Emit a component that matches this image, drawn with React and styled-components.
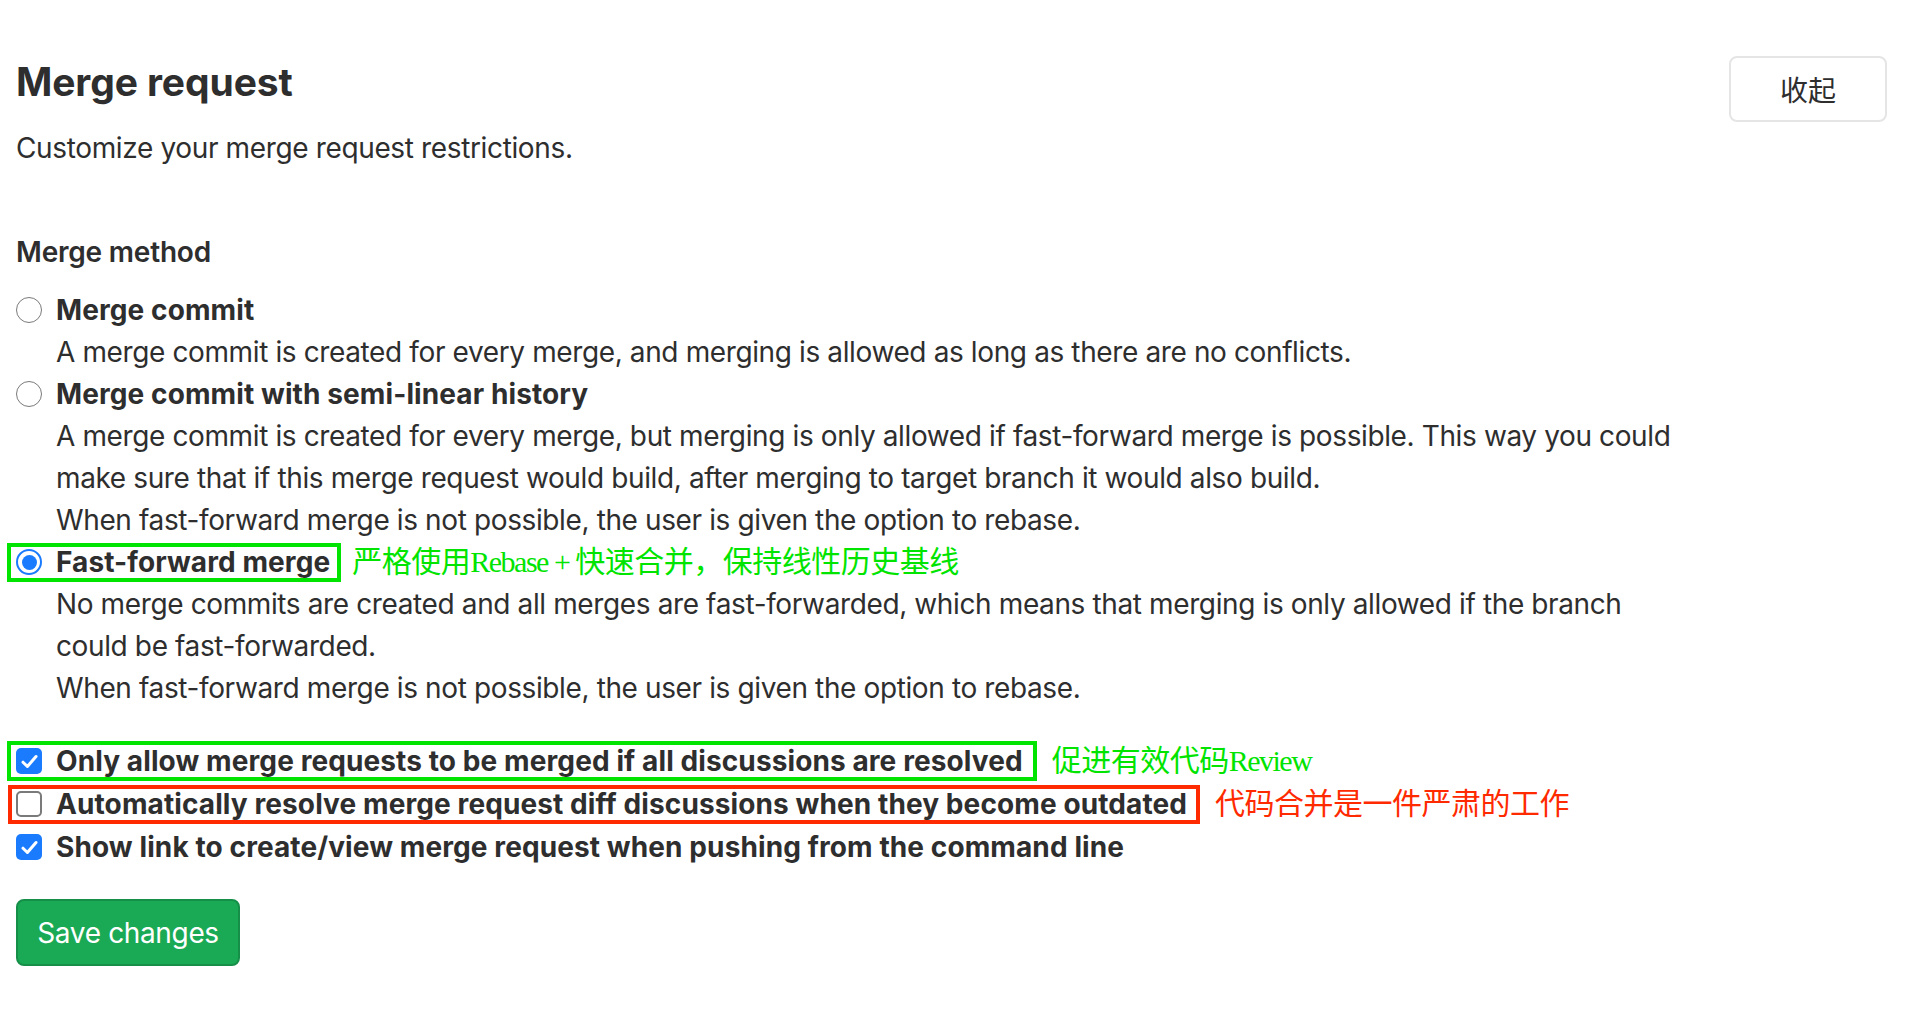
import React from "react";
import styled, { createGlobalStyle, css } from "styled-components";

const GlobalStyle = createGlobalStyle`
  html, body {
    margin: 0;
    padding: 0;
    background: #ffffff;
  }
  body {
    font-family: Inter, "Liberation Sans", "Noto Sans CJK SC", sans-serif;
    color: #2e2e2e;
    -webkit-font-smoothing: antialiased;
  }
  * { box-sizing: border-box; }
`;

const Page = styled.div`
  padding: 0 29px 40px 16px;
  width: 1916px;
`;

const Header = styled.header`
  display: flex;
  justify-content: space-between;
  align-items: flex-start;
`;

const HeaderText = styled.div`
  display: flex;
  flex-direction: column;
  padding-top: 58px;
`;

const Title = styled.h4`
  margin: 0;
  font-size: 39px;
  line-height: 48px;
  font-weight: 700;
  letter-spacing: -0.1px;
  color: #2e2e2e;
`;

const Subtitle = styled.p`
  margin: 21px 0 0;
  font-size: 28px;
  line-height: 42px;
  letter-spacing: -0.36px;
`;

const CollapseButton = styled.button`
  margin-top: 56px;
  width: 158px;
  height: 66px;
  background: #fff;
  border: 2px solid #e5e5e5;
  border-radius: 8px;
  font-family: "Noto Sans CJK SC", sans-serif;
  font-size: 28px;
  color: #2e2e2e;
  cursor: pointer;
`;

const Body = styled.section`
  margin-top: 62px;
  display: flex;
  flex-direction: column;
  align-items: flex-start;
`;

const FieldLabel = styled.div`
  font-size: 28px;
  line-height: 42px;
  font-weight: 600;
  letter-spacing: -0.2px;
  margin-bottom: 16px;
`;

const Options = styled.div`
  display: flex;
  flex-direction: column;
  align-items: flex-start;
`;

const Row = styled.label`
  position: relative;
  display: inline-flex;
  align-items: center;
  gap: 14px;
  height: 42px;
  font-size: 28px;
  font-weight: 700;
  letter-spacing: 0.1px;
  white-space: nowrap;
`;

const Annotated = styled.div`
  display: inline-flex;
  align-items: center;
  ${(p) => p.$space && css`margin-top: ${p.$space}px;`}
`;

const Frame = styled.span`
  position: absolute;
  pointer-events: none;
  border: 4px solid ${(p) => p.$color};
  top: ${(p) => p.$t}px;
  bottom: ${(p) => p.$b}px;
  left: ${(p) => p.$l}px;
  right: ${(p) => p.$r}px;
`;

const Note = styled.span`
  font-family: "Liberation Serif", "Noto Sans CJK SC", serif;
  font-size: 30px;
  line-height: 42px;
  color: ${(p) => p.$color};
  margin-left: ${(p) => p.$gap}px;
  white-space: nowrap;
  letter-spacing: -0.5px;
`;

const Latin = styled.span`
  letter-spacing: -1.5px;
`;

const Help = styled.p`
  margin: 0;
  padding-left: 40px;
  max-width: 1672px;
  font-size: 28px;
  line-height: 42px;
  letter-spacing: -0.38px;
  font-weight: 400;
`;

const RadioDot = styled.span`
  flex: none;
  width: 26px;
  height: 26px;
  border-radius: 50%;
  background: #fff;
  display: inline-flex;
  align-items: center;
  justify-content: center;
  border: ${(p) => (p.$on ? "2px solid #1a7bff" : "1.5px solid #7a7a7a")};
  &::after {
    content: "";
    display: ${(p) => (p.$on ? "block" : "none")};
    width: 15px;
    height: 15px;
    border-radius: 50%;
    background: #1a7bff;
  }
`;

const Box = styled.span`
  flex: none;
  width: 26px;
  height: 26px;
  border-radius: 5px;
  display: inline-flex;
  align-items: center;
  justify-content: center;
  background: ${(p) => (p.$on ? "#1a7bff" : "#fff")};
  border: ${(p) => (p.$on ? "none" : "2px solid #7a7a7a")};
`;

const Checks = styled.div`
  margin-top: 31px;
  display: flex;
  flex-direction: column;
  align-items: flex-start;
  gap: 1px;
`;

const SaveButton = styled.button`
  margin-top: 31px;
  width: 224px;
  height: 67px;
  background: #1aaa55;
  border: 2px solid #168f48;
  border-radius: 8px;
  color: #fff;
  font-family: Inter, "Liberation Sans", sans-serif;
  font-size: 28px;
  letter-spacing: -0.35px;
  cursor: pointer;
`;

function Radio({ on, children }) {
  return (
    <>
      <RadioDot $on={on} />
      <span>{children}</span>
    </>
  );
}

function Checkbox({ on, children }) {
  return (
    <>
      <Box $on={on}>
        {on && (
          <svg width="17" height="15" viewBox="0 0 17 15">
            <path
              d="M2 8.2 L6.4 12.5 L15 2.5"
              fill="none"
              stroke="#fff"
              strokeWidth="3"
              strokeLinecap="round"
              strokeLinejoin="round"
            />
          </svg>
        )}
      </Box>
      <span>{children}</span>
    </>
  );
}

const GREEN = "#00e400";
const RED = "#ff2a00";

export default function App() {
  return (
    <>
      <GlobalStyle />
      <Page>
        <Header>
          <HeaderText>
            <Title>Merge request</Title>
            <Subtitle>Customize your merge request restrictions.</Subtitle>
          </HeaderText>
          <CollapseButton>收起</CollapseButton>
        </Header>

        <Body>
          <FieldLabel>Merge method</FieldLabel>
          <Options>
            <Row>
              <Radio on={false}>Merge commit</Radio>
            </Row>
            <Help>
              A merge commit is created for every merge, and merging is allowed as long as there are no conflicts.
            </Help>
            <Row>
              <Radio on={false}>Merge commit with semi-linear history</Radio>
            </Row>
            <Help>
              A merge commit is created for every merge, but merging is only allowed if fast-forward merge is
              possible. This way you could make sure that if this merge request would build, after merging to
              target branch it would also build.
            </Help>
            <Help>When fast-forward merge is not possible, the user is given the option to rebase.</Help>
            <Annotated>
              <Row>
                <Frame $color={GREEN} $t={2} $b={1} $l={-9} $r={-11} />
                <Radio on={true}>Fast-forward merge</Radio>
              </Row>
              <Note $color={GREEN} $gap={22}>
                严格使用<Latin>Rebase + </Latin>快速合并，保持线性历史基线
              </Note>
            </Annotated>
            <Help>
              No merge commits are created and all merges are fast-forwarded, which means that merging is only
              allowed if the branch could be fast-forwarded.
            </Help>
            <Help>When fast-forward merge is not possible, the user is given the option to rebase.</Help>
          </Options>

          <Checks>
            <Annotated>
              <Row>
                <Frame $color={GREEN} $t={1} $b={1} $l={-9} $r={-14} />
                <Checkbox on={true}>
                  Only allow merge requests to be merged if all discussions are resolved
                </Checkbox>
              </Row>
              <Note $color={GREEN} $gap={29}>
                促进有效代码<Latin>Review</Latin>
              </Note>
            </Annotated>
            <Annotated>
              <Row>
                <Frame $color={RED} $t={2} $b={1} $l={-8} $r={-13} />
                <Checkbox on={false}>
                  Automatically resolve merge request diff discussions when they become outdated
                </Checkbox>
              </Row>
              <Note $color={RED} $gap={28}>
                代码合并是一件严肃的工作
              </Note>
            </Annotated>
            <Row>
              <Checkbox on={true}>
                Show link to create/view merge request when pushing from the command line
              </Checkbox>
            </Row>
          </Checks>

          <SaveButton>Save changes</SaveButton>
        </Body>
      </Page>
    </>
  );
}
